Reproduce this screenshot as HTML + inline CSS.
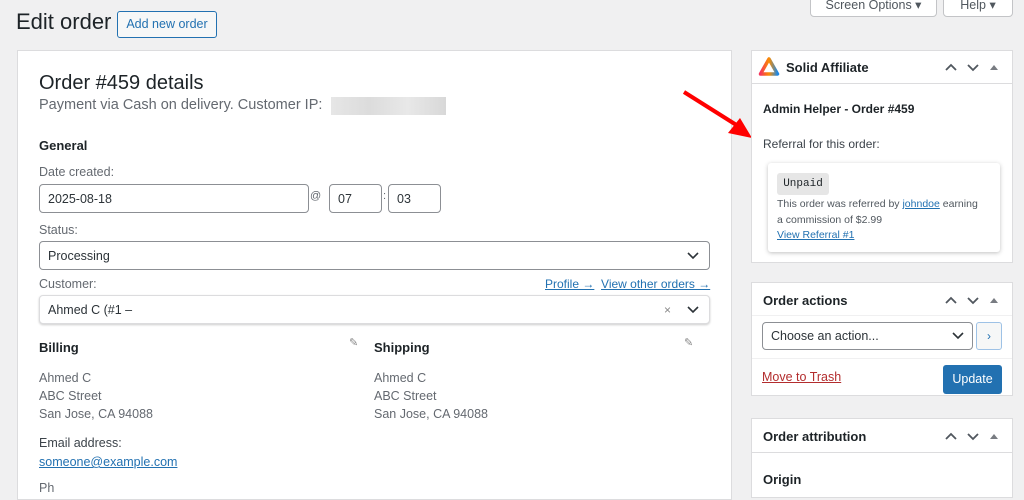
<!DOCTYPE html>
<html><head><style>
*{box-sizing:border-box;margin:0;padding:0}
body{width:1024px;height:488px;overflow:hidden;background:#f0f0f1;font-family:"Liberation Sans",sans-serif;color:#1d2327;font-size:12.5px;position:relative}
.a{position:absolute}
.panel{background:#fff;border:1px solid #dcdcde}
.lbl{color:#646970;font-size:12.5px}
.inp{position:absolute;background:#fff;border:1px solid #8c8f94;border-radius:4px;font-size:12.5px;padding-left:8px;display:flex;align-items:center;color:#2c3338}
.lnk{color:#2271b1;text-decoration:underline}
.hd{font-weight:bold;font-size:13px}
.grey{color:#646970;line-height:18px}
.chev{position:absolute}
</style></head><body>
<div class="a" style="left:810px;top:-8px;width:127px;height:25px;background:#fff;border:1px solid #c3c4c7;border-radius:0 0 4px 4px;color:#50575e;text-align:center;line-height:24px">Screen Options ▾</div>
<div class="a" style="left:943px;top:-8px;width:70px;height:25px;background:#fff;border:1px solid #c3c4c7;border-radius:0 0 4px 4px;color:#50575e;text-align:center;line-height:24px">Help ▾</div>
<div class="a" style="left:16px;top:9px;font-size:22px;font-weight:400">Edit order</div>
<div class="a" style="left:117px;top:11px;width:100px;height:27px;border:1px solid #2271b1;border-radius:3px;background:#f6f7f7;color:#2271b1;text-align:center;line-height:25px;font-size:12.5px">Add new order</div>

<div class="a panel" style="left:17px;top:50px;width:715px;height:450px">
<div class="a" style="left:21px;top:21px;font-size:20px">Order #459 details</div>
<div class="a" style="left:21px;top:46px;font-size:14.5px;color:#646970">Payment via Cash on delivery. Customer IP:</div>
<div class="a" style="left:313px;top:46px;width:115px;height:18px;background:linear-gradient(90deg,#e6e6e6,#dcdcdc,#e8e8e8,#d8d8d8)"></div>
<div class="a hd" style="left:21px;top:87px">General</div>
<div class="a lbl" style="left:21px;top:114px">Date created:</div>
<div class="inp" style="left:21px;top:133px;width:270px;height:29px">2025-08-18</div>
<div class="a lbl" style="left:292px;top:139px;font-size:11px">@</div>
<div class="inp" style="left:311px;top:133px;width:53px;height:29px">07</div>
<div class="a lbl" style="left:365px;top:139px;font-size:11px">:</div>
<div class="inp" style="left:370px;top:133px;width:53px;height:29px">03</div>
<div class="a lbl" style="left:21px;top:172px">Status:</div>
<div class="inp" style="left:21px;top:190px;width:671px;height:29px">Processing<svg class="chev" style="right:10px" width="12" height="8"><path d="M1 1l5 5 5-5" fill="none" stroke="#2c3338" stroke-width="1.6"/></svg></div>
<div class="a lbl" style="left:21px;top:226px">Customer:</div>
<div class="a" style="left:527px;top:226px;font-size:12px"><span class="lnk">Profile →</span>&nbsp; <span class="lnk">View other orders →</span></div>
<div class="inp" style="left:21px;top:244px;width:671px;height:29px;border-color:#dcdcde;box-shadow:0 1px 2px #ccc">Ahmed C (#1 –<span style="position:absolute;right:38px;color:#888;font-size:12px">×</span><svg class="chev" style="right:10px" width="12" height="8"><path d="M1 1l5 5 5-5" fill="none" stroke="#2c3338" stroke-width="1.6"/></svg></div>
<div class="a hd" style="left:21px;top:289px">Billing</div>
<div class="a" style="left:331px;top:285px;color:#888;font-size:11px">✎</div>
<div class="a hd" style="left:356px;top:289px">Shipping</div>
<div class="a" style="left:666px;top:285px;color:#888;font-size:11px">✎</div>
<div class="a grey" style="left:21px;top:318px">Ahmed C<br>ABC Street<br>San Jose, CA 94088</div>
<div class="a grey" style="left:356px;top:318px">Ahmed C<br>ABC Street<br>San Jose, CA 94088</div>
<div class="a" style="left:21px;top:385px;color:#3c434a">Email address:</div>
<div class="a lnk" style="left:21px;top:404px">someone@example.com</div>
<div class="a lbl" style="left:21px;top:430px">Ph</div>
</div>

<svg class="a" style="left:680px;top:88px" width="80" height="60"><line x1="4" y1="4" x2="58" y2="38" stroke="#f00" stroke-width="4"/><polygon points="72,50 48,45 60,30" fill="#f00"/></svg>

<div class="a panel" style="left:751px;top:50px;width:262px;height:213px">
<div class="a" style="left:0;top:0;width:260px;height:33px;border-bottom:1px solid #dcdcde"></div>
<svg class="a" style="left:6px;top:5px" width="22" height="20"><defs><linearGradient id="g" x1="0" x2="1"><stop offset="0" stop-color="#f5365c"/><stop offset=".5" stop-color="#fb8c00"/><stop offset="1" stop-color="#1e88e5"/></linearGradient></defs><path d="M11 3 L19.5 18 L2.5 18 Z" fill="none" stroke="url(#g)" stroke-width="3.5" stroke-linejoin="round"/></svg>
<div class="a hd" style="left:34px;top:9px">Solid Affiliate</div>
<svg class="a" style="left:192px;top:10px" width="62" height="12"><path d="M2 9l5-5 5 5M24 4l5 5 5-5" fill="none" stroke="#50575e" stroke-width="1.8"/><path d="M46 9l4-5 4 5z" fill="#787c82"/></svg>
<div class="a hd" style="left:11px;top:51px;font-size:12px">Admin Helper - Order #459</div>
<div class="a" style="left:11px;top:86px;color:#3c434a;font-size:12px">Referral for this order:</div>
<div class="a" style="left:16px;top:112px;width:232px;height:89px;background:#fff;box-shadow:0 1px 4px rgba(0,0,0,.25);border-radius:3px">
<div class="a" style="left:9px;top:10px;width:52px;height:22px;background:#e6e6e6;border-radius:3px;font-family:'Liberation Mono',monospace;font-size:11px;line-height:22px;text-align:center">Unpaid</div>
<div class="a" style="left:9px;top:34px;font-size:10.5px;color:#50575e;line-height:15.5px;width:225px">This order was referred by <span class="lnk">johndoe</span> earning<br>a commission of $2.99<br><span class="lnk">View Referral #1</span></div>
</div>
</div>

<div class="a panel" style="left:751px;top:282px;width:262px;height:114px">
<div class="a" style="left:0;top:0;width:260px;height:33px;border-bottom:1px solid #f0f0f1"></div>
<div class="a hd" style="left:11px;top:10px">Order actions</div>
<svg class="a" style="left:192px;top:11px" width="62" height="12"><path d="M2 9l5-5 5 5M24 4l5 5 5-5" fill="none" stroke="#50575e" stroke-width="1.8"/><path d="M46 9l4-5 4 5z" fill="#787c82"/></svg>
<div class="inp" style="left:10px;top:39px;width:211px;height:28px">Choose an action...<svg class="chev" style="right:8px" width="12" height="8"><path d="M1 1l5 5 5-5" fill="none" stroke="#2c3338" stroke-width="1.6"/></svg></div>
<div class="a" style="left:224px;top:39px;width:26px;height:28px;border:1px solid #9ec2e6;border-radius:3px;background:#f6f7f7;color:#2271b1;text-align:center;line-height:26px;font-size:12px">›</div>
<div class="a" style="left:0;top:75px;width:260px;border-top:1px solid #f0f0f1"></div>
<div class="a" style="left:10px;top:87px;color:#b32d2e;text-decoration:underline">Move to Trash</div>
<div class="a" style="left:191px;top:82px;width:59px;height:29px;background:#2271b1;border-radius:3px;color:#fff;text-align:center;line-height:29px">Update</div>
</div>

<div class="a panel" style="left:751px;top:418px;width:262px;height:80px">
<div class="a" style="left:0;top:0;width:260px;height:34px;border-bottom:1px solid #dcdcde"></div>
<div class="a hd" style="left:11px;top:10px">Order attribution</div>
<svg class="a" style="left:192px;top:11px" width="62" height="12"><path d="M2 9l5-5 5 5M24 4l5 5 5-5" fill="none" stroke="#50575e" stroke-width="1.8"/><path d="M46 9l4-5 4 5z" fill="#787c82"/></svg>
<div class="a hd" style="left:11px;top:53px">Origin</div>
</div>
</body></html>
